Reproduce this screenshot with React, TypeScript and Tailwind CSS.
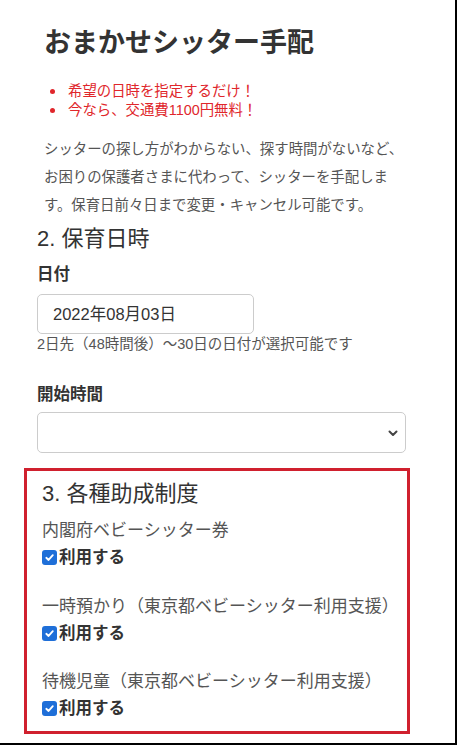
import React from "react";

const font = { fontFamily: '"Liberation Sans", "Noto Sans CJK JP", sans-serif' };

function Check() {
  return (
    <span className="inline-flex h-[15px] w-[15px] items-center justify-center rounded-[3px] bg-[#1f6fd8] mr-[2px]">
      <svg width="11" height="11" viewBox="0 0 12 12">
        <path d="M2.5 6.3 L5 8.7 L9.6 3.4" fill="none" stroke="#fff" strokeWidth="2" strokeLinecap="round" strokeLinejoin="round" />
      </svg>
    </span>
  );
}

function Subsidy({ title, mt }: { title: string; mt: string }) {
  return (
    <div className={mt}>
      <div className="text-[17px] leading-[24px] text-[#555]">{title}</div>
      <div className="mt-[2px] flex items-center text-[16.5px] leading-[24px] font-bold text-[#333]">
        <Check />
        利用する
      </div>
    </div>
  );
}

export default function App() {
  return (
    <div style={font} className="w-[457px] h-[745px] bg-white border-r-2 border-b-2 border-black overflow-hidden">
      <h1 className="mt-[25px] pl-[44px] text-[27px] leading-[36px] font-bold text-[#333]">おまかせシッター手配</h1>
      <ul className="mt-[21px] text-[14.4px] leading-[19px] text-[#e0262b]">
        <li className="flex items-center">
          <span className="ml-[50px] mr-[13px] h-[5px] w-[5px] rounded-full bg-[#e0262b]" />
          希望の日時を指定するだけ！
        </li>
        <li className="flex items-center">
          <span className="ml-[50px] mr-[13px] h-[5px] w-[5px] rounded-full bg-[#e0262b]" />
          今なら、交通費1100円無料！
        </li>
      </ul>
      <p className="mt-[15px] ml-[44px] w-[368px] text-[14.4px] leading-[28px] text-[#555]">
        シッターの探し方がわからない、探す時間がないなど、お困りの保護者さまに代わって、シッターを手配します。保育日前々日まで変更・キャンセル可能です。
      </p>
      <div className="pl-[37px]">
        <h2 className="mt-[5px] text-[22px] leading-[30px] text-[#333]">2. 保育日時</h2>
        <div className="mt-[8px] text-[16.5px] leading-[24px] font-bold text-[#333]">日付</div>
        <div className="mt-[8px] flex h-[40px] w-[217px] items-center rounded-[5px] border border-[#ccc] pl-[15px] text-[16.5px] text-[#333]">
          2022年08月03日
        </div>
        <div className="text-[14.5px] leading-[20px] text-[#555]">2日先（48時間後）〜30日の日付が選択可能です</div>
        <div className="mt-[28px] text-[16.5px] leading-[24px] font-bold text-[#333]">開始時間</div>
        <div className="mt-[6px] flex h-[41px] w-[369px] items-center justify-end rounded-[5px] border border-[#ccc] pr-[6px]">
          <svg width="12" height="12" viewBox="0 0 12 12">
            <path d="M2.5 4.5 L6 8 L9.5 4.5" fill="none" stroke="#444" strokeWidth="2" strokeLinecap="round" strokeLinejoin="round" />
          </svg>
        </div>
      </div>
      <div className="mt-[15px] ml-[24px] w-[386px] h-[266px] border-[3px] border-[#d0202e] pl-[15px] pt-[8px]">
        <h2 className="text-[22px] leading-[30px] text-[#333]">3. 各種助成制度</h2>
        <Subsidy title="内閣府ベビーシッター券" mt="mt-[10px]" />
        <Subsidy title="一時預かり（東京都ベビーシッター利用支援）" mt="mt-[26px]" />
        <Subsidy title="待機児童（東京都ベビーシッター利用支援）" mt="mt-[25px]" />
      </div>
    </div>
  );
}
